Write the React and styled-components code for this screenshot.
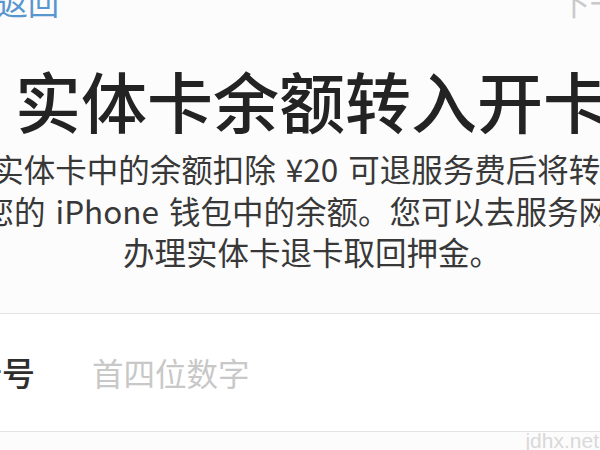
import React from "react";
import styled, { createGlobalStyle } from "styled-components";

const GlobalStyle = createGlobalStyle`
  html, body {
    margin: 0;
    padding: 0;
  }
  body {
    width: 600px;
    height: 450px;
    overflow: hidden;
    background: #fcfcfc;
    font-family: "Noto Sans CJK SC", "Noto Sans", sans-serif;
  }
`;

const Viewport = styled.div`
  position: relative;
  width: 600px;
  height: 450px;
  overflow: hidden;
  background: #fcfcfc;
`;

const Screen = styled.div`
  width: 720px;
  margin-left: -48px;
  display: flex;
  flex-direction: column;
`;

const NavBar = styled.div`
  display: flex;
  align-items: center;
  justify-content: space-between;
  height: 32px;
  margin-top: -14px;
  padding: 0 20px 0 12px;
  font-size: 31px;
  line-height: 32px;
`;

const BackLink = styled.a`
  display: flex;
  align-items: center;
  gap: 13px;
  color: #5896cf;
  text-decoration: none;
`;

const NextButton = styled.span`
  color: #c9c9c9;
`;

const Title = styled.h1`
  margin: 41px 0 0;
  font-size: 66px;
  line-height: 80px;
  font-weight: 500;
  color: #232323;
  text-align: center;
  white-space: nowrap;
`;

const Intro = styled.p`
  margin: 9px 0 0;
  font-size: 31.5px;
  line-height: 41.5px;
  word-spacing: 3px;
  color: #383838;
  text-align: center;
  white-space: nowrap;

  span {
    display: block;
  }
`;

const FormGroup = styled.div`
  margin-top: 40px;
  background: #ffffff;
  border-top: 1px solid #e3e3e3;
  border-bottom: 1px solid #e3e3e3;
`;

const FieldRow = styled.label`
  display: flex;
  align-items: center;
  height: 117px;
  padding-left: 17px;
`;

const FieldLabel = styled.span`
  width: 123px;
  flex-shrink: 0;
  font-size: 33px;
  font-weight: 500;
  color: #2e2e2e;
`;

const FieldInput = styled.input`
  flex: 1;
  border: none;
  outline: none;
  background: transparent;
  padding: 0;
  font-family: inherit;
  font-size: 31.5px;
  color: #333;

  &::placeholder {
    color: #c8c8c8;
  }
`;

const Watermark = styled.span`
  position: absolute;
  right: 1px;
  bottom: -3px;
  font-family: "Liberation Sans", Arial, sans-serif;
  font-size: 21px;
  color: #d9d9d9;
`;

const Chevron = () => (
  <svg width="20" height="32" viewBox="0 0 20 32" fill="none">
    <polyline
      points="16,3 4,16 16,29"
      stroke="#5896cf"
      strokeWidth="3.5"
      strokeLinecap="round"
      strokeLinejoin="round"
    />
  </svg>
);

const App = () => {
  return (
    <Viewport>
      <GlobalStyle />
      <Screen>
        <NavBar>
          <BackLink href="#">
            <Chevron />
            返回
          </BackLink>
          <NextButton>下一步</NextButton>
        </NavBar>

        <Title>实体卡余额转入开卡</Title>

        <Intro>
          <span>实体卡中的余额扣除 ¥20 可退服务费后将转入</span>
          <span>您的 iPhone 钱包中的余额。您可以去服务网点</span>
          <span>办理实体卡退卡取回押金。</span>
        </Intro>

        <FormGroup>
          <FieldRow>
            <FieldLabel>卡号</FieldLabel>
            <FieldInput placeholder="首四位数字" />
          </FieldRow>
        </FormGroup>
      </Screen>
      <Watermark>jdhx.net</Watermark>
    </Viewport>
  );
};

export default App;
